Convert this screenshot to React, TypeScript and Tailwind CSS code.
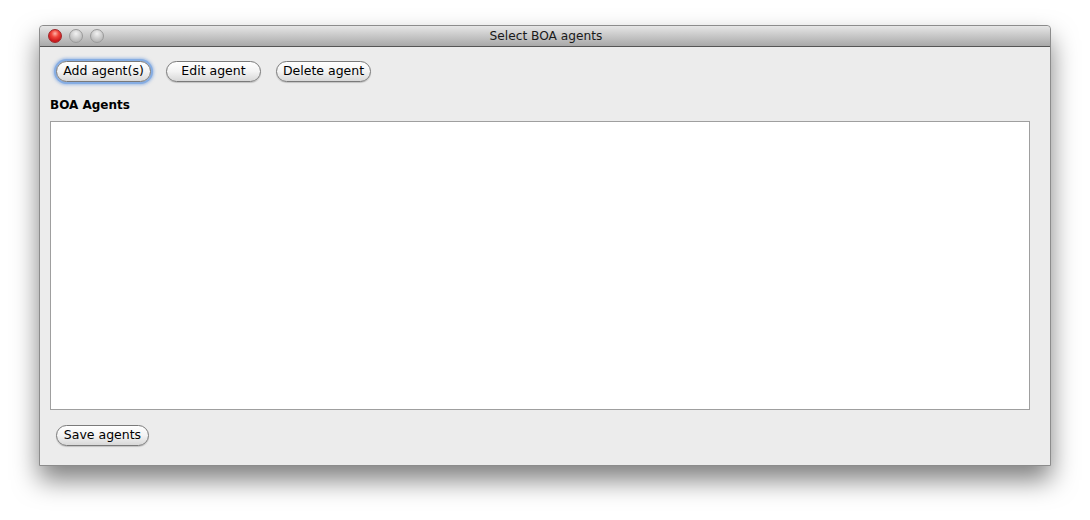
import React from "react";

function MacButton({ label, focused, width }: { label: string; focused?: boolean; width: string }) {
  return (
    <div
      className={`relative flex h-[21px] items-center justify-center rounded-full border border-[#7a7a7a] bg-gradient-to-b from-[#ffffff] via-[#f3f3f3] to-[#d8d8d8] text-[12.5px] leading-none text-black ${width} ${
        focused ? "shadow-[0_0_0_2px_#86ade3,0_0_3px_3px_rgba(100,150,220,0.55)]" : "shadow-[0_1px_1px_rgba(0,0,0,0.18)]"
      }`}
      style={{ fontFamily: '"DejaVu Sans", "Liberation Sans", sans-serif' }}
    >
      {label}
    </div>
  );
}

function Light({ red }: { red?: boolean }) {
  return red ? (
    <div className="h-[14px] w-[14px] rounded-full border border-[#a0262a] bg-[radial-gradient(circle_at_50%_30%,#ffb3a8_0%,#f0463c_35%,#c8161a_75%,#e8504a_100%)]" />
  ) : (
    <div className="h-[14px] w-[14px] rounded-full border border-[#9a9a9a] bg-[radial-gradient(circle_at_50%_30%,#f2f2f2_0%,#cfcfcf_45%,#b5b5b5_80%,#d8d8d8_100%)]" />
  );
}

export default function App() {
  return (
    <div
      className="h-[520px] w-[1090px] bg-white pl-[39px] pt-[25px]"
      style={{ fontFamily: '"DejaVu Sans", "Liberation Sans", sans-serif' }}
    >
      <div className="flex h-[441px] w-[1012px] flex-col rounded-t-[4px] border border-[#8c8c8c] bg-[#ececec] shadow-[0_14px_26px_rgba(0,0,0,0.5)]">
        <div className="relative flex h-[21px] shrink-0 items-center rounded-t-[4px] border-b border-[#555555] bg-gradient-to-b from-[#e6e6e6] to-[#a9a9a9] pl-[8px]">
          <div className="flex gap-[7px]">
            <Light red />
            <Light />
            <Light />
          </div>
          <div className="absolute inset-0 flex items-center justify-center pl-[2px] text-[12.2px] text-[#1a1a1a]">
            Select BOA agents
          </div>
        </div>
        <div className="flex flex-1 flex-col pl-[10px] pr-[20px]">
          <div className="mt-[14px] flex gap-[15px] pl-[6px]">
            <MacButton label="Add agent(s)" focused width="w-[95px]" />
            <MacButton label="Edit agent" width="w-[95px]" />
            <MacButton label="Delete agent" width="w-[95px]" />
          </div>
          <div className="mt-[16px] text-[12px] font-bold leading-[15px] text-black">BOA Agents</div>
          <div className="mt-[8px] h-[289px] border border-[#9f9f9f] bg-white" />
          <div className="mt-[15px] pl-[6px]">
            <MacButton label="Save agents" width="w-[93px]" />
          </div>
        </div>
      </div>
    </div>
  );
}
